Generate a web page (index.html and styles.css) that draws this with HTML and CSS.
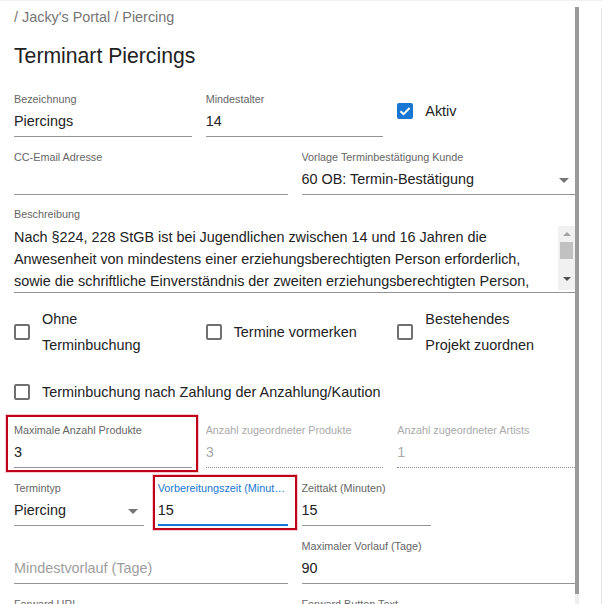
FILE: index.html
```html
<!DOCTYPE html>
<html lang="de">
<head>
<meta charset="utf-8">
<title>Terminart Piercings</title>
<link rel="stylesheet" href="styles.css">
</head>
<body>
<div class="app">
  <div class="panel">
    <div class="crumb">/ Jacky's Portal / Piercing</div>
    <h1 class="title">Terminart Piercings</h1>

    <div class="grid g3 row">
      <div class="field">
        <div class="label">Bezeichnung</div>
        <div class="value">Piercings</div>
      </div>
      <div class="field">
        <div class="label">Mindestalter</div>
        <div class="value">14</div>
      </div>
      <div class="check-field">
        <span class="box checked"><svg viewBox="0 0 16 16" width="16" height="16"><path d="M3.5 8.2 L6.6 11.2 L12.6 5" fill="none" stroke="#fff" stroke-width="2"/></svg></span>
        <span class="check-text">Aktiv</span>
      </div>
    </div>

    <div class="grid g2 row">
      <div class="field">
        <div class="label">CC-Email Adresse</div>
        <div class="value"></div>
      </div>
      <div class="field">
        <div class="label">Vorlage Terminbestätigung Kunde</div>
        <div class="value select">60 OB: Termin-Bestätigung<span class="arrow"></span></div>
      </div>
    </div>

    <div class="field row desc">
      <div class="label">Beschreibung</div>
      <div class="value area">
        <div class="area-text">
          <div class="line">Nach §224, 228 StGB ist bei Jugendlichen zwischen 14 und 16 Jahren die</div>
          <div class="line">Anwesenheit von mindestens einer erziehungsberechtigten Person erforderlich,</div>
          <div class="line">sowie die schriftliche Einverständnis der zweiten erziehungsberechtigten Person,</div>
        </div>
        <div class="mini-scroll">
          <span class="up"></span>
          <span class="mini-thumb"></span>
          <span class="down"></span>
        </div>
      </div>
    </div>

    <div class="grid g3 checks">
      <div class="check-field">
        <span class="box"></span>
        <span class="check-text">Ohne<br>Terminbuchung</span>
      </div>
      <div class="check-field">
        <span class="box"></span>
        <span class="check-text">Termine vormerken</span>
      </div>
      <div class="check-field">
        <span class="box"></span>
        <span class="check-text">Bestehendes<br>Projekt zuordnen</span>
      </div>
    </div>

    <div class="check-field single">
      <span class="box"></span>
      <span class="check-text">Terminbuchung nach Zahlung der Anzahlung/Kaution</span>
    </div>

    <div class="grid g3 row numbers">
      <div class="field marked m1">
        <div class="label">Maximale Anzahl Produkte</div>
        <div class="value">3</div>
      </div>
      <div class="field disabled">
        <div class="label">Anzahl zugeordneter Produkte</div>
        <div class="value">3</div>
      </div>
      <div class="field disabled">
        <div class="label">Anzahl zugeordneter Artists</div>
        <div class="value">1</div>
      </div>
    </div>

    <div class="grid g4 row">
      <div class="field">
        <div class="label">Termintyp</div>
        <div class="value select">Piercing<span class="arrow"></span></div>
      </div>
      <div class="field focused marked m2">
        <div class="label">Vorbereitungszeit (Minuten)</div>
        <div class="value">15</div>
      </div>
      <div class="field">
        <div class="label">Zeittakt (Minuten)</div>
        <div class="value">15</div>
      </div>
    </div>

    <div class="grid g2 row">
      <div class="field">
        <div class="label"></div>
        <div class="value placeholder">Mindestvorlauf (Tage)</div>
      </div>
      <div class="field">
        <div class="label">Maximaler Vorlauf (Tage)</div>
        <div class="value">90</div>
      </div>
    </div>

    <div class="grid g2 row">
      <div class="field">
        <div class="label">Forward URL</div>
        <div class="value"></div>
      </div>
      <div class="field">
        <div class="label">Forward Button Text</div>
        <div class="value"></div>
      </div>
    </div>
  </div>
  <div class="track"><div class="thumb"></div></div>
  <div class="side"></div>
</div>
</body>
</html>
```

FILE: styles.css
```css
html, body {
  margin: 0;
  padding: 0;
  background: #fff;
  overflow: hidden;
}
body {
  font-family: "Liberation Sans", Arial, sans-serif;
  color: #222;
}
.app {
  display: flex;
  width: 602px;
  height: 604px;
  overflow: hidden;
  border-top: 1px solid #f0f0f0;
  box-sizing: border-box;
}
.panel {
  width: 575px;
  flex: none;
  box-sizing: border-box;
  padding: 6px 0 0 14px;
  overflow: hidden;
}
.crumb {
  font-size: 14.4px;
  line-height: 20px;
  color: #757575;
}
.title {
  margin: 15px 0 0;
  font-size: 21.2px;
  line-height: 28px;
  font-weight: 400;
  color: #222;
}
.grid {
  display: grid;
  column-gap: 14px;
}
.g2 { grid-template-columns: repeat(2, 1fr); }
.g3 { grid-template-columns: repeat(3, 1fr); }
.g4 { grid-template-columns: repeat(4, 1fr); }
.row { margin-top: 13px; }
.title + .row { margin-top: 22px; }
.row.desc { margin-top: 12px; }

.field {
  display: flex;
  flex-direction: column;
  min-width: 0;
}
.label {
  font-size: 10.8px;
  line-height: 14px;
  height: 14px;
  color: #666;
  white-space: nowrap;
  overflow: hidden;
  text-overflow: ellipsis;
}
.value {
  position: relative;
  font-size: 14.4px;
  line-height: 22px;
  height: 22px;
  padding: 4px 0 4px;
  border-bottom: 1px solid #949494;
  color: #222;
  white-space: nowrap;
}
.select .arrow {
  position: absolute;
  right: 6px;
  top: 14px;
  width: 0;
  height: 0;
  border-left: 5px solid transparent;
  border-right: 5px solid transparent;
  border-top: 5px solid #757575;
}
.placeholder {
  color: #9e9e9e;
}
.disabled .label,
.disabled .value {
  color: #aaa;
}
.disabled .value {
  border-bottom: 1px dotted #8a8a8a;
}
.focused .label { color: #1976d2; }
.focused .value {
  border-bottom: 2px solid #1976d2;
  padding-bottom: 3px;
}

.area {
  height: 66px;
  padding: 5px 0 0;
  display: flex;
}
.area-text { flex: 1; overflow: hidden; }
.line { white-space: nowrap; }
.mini-scroll {
  width: 17px;
  height: 64px;
  background: #f1f1f1;
  display: flex;
  flex-direction: column;
  align-items: center;
  flex: none;
}
.mini-scroll .up {
  margin-top: 6px;
  width: 0; height: 0;
  border-left: 4px solid transparent;
  border-right: 4px solid transparent;
  border-bottom: 4px solid #a3a3a3;
}
.mini-thumb {
  margin-top: 6px;
  width: 13px;
  height: 17px;
  background: #c1c1c1;
}
.mini-scroll .down {
  margin-top: 18px;
  width: 0; height: 0;
  border-left: 4px solid transparent;
  border-right: 4px solid transparent;
  border-top: 4px solid #505050;
}

.check-field {
  display: flex;
  align-items: center;
  gap: 12px;
}
.check-text {
  font-size: 14.4px;
  line-height: 26px;
  color: #222;
}
.box {
  width: 16px;
  height: 16px;
  box-sizing: border-box;
  border: 2px solid #707070;
  border-radius: 2px;
  flex: none;
  display: flex;
}
.box.checked {
  background: #1976d2;
  border-color: #1976d2;
}
.box.checked svg { margin: -2px; }
.row .check-field { margin-top: 5px; align-self: start; height: 28px; }
.checks { margin-top: 13px; }
.single { margin-top: 21px; }
.numbers { margin-top: 18px; }

.marked { position: relative; }
.marked::after {
  content: "";
  position: absolute;
  border: 2px solid #c0001b;
  box-shadow: 0 0 0 1px rgba(200, 0, 30, 0.2);
  pointer-events: none;
}
.m1::after { left: -8px; right: -6px; top: -8px; bottom: -4px; }
.m2::after { left: -5px; right: -9px; top: -6px; bottom: -4px; }

.track {
  width: 4px;
  flex: none;
  display: flex;
  flex-direction: column;
  background: #eee;
  margin-top: 6px;
}
.thumb {
  height: 587px;
  background: #9a9a9a;
}
.side {
  flex: 1;
  border-right: 1px solid #e6e6e6;
  margin-top: 7px;
}
```
